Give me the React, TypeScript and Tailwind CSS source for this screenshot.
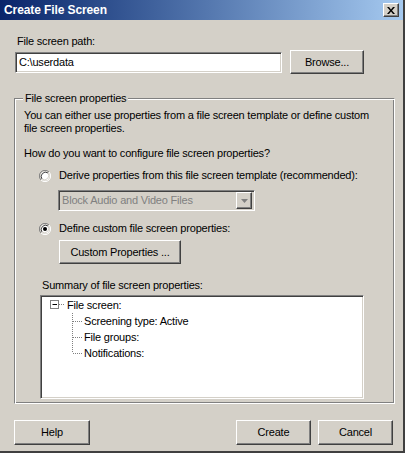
import React from "react";

const raised =
  "bg-[#d4d0c8] border border-t-white border-l-white border-b-[#404040] border-r-[#404040] shadow-[inset_-1px_-1px_0_#808080,inset_1px_1px_0_#d4d0c8]";
const sunken =
  "border border-t-[#808080] border-l-[#808080] border-b-white border-r-white shadow-[inset_1px_1px_0_#404040,inset_-1px_-1px_0_#d4d0c8]";

function Radio({ checked }: { checked?: boolean }) {
  return (
    <svg width="12" height="12" viewBox="0 0 12 12" className="shrink-0">
      <path d="M10 2 A5.5 5.5 0 0 0 2 10" fill="none" stroke="#808080" strokeWidth="1" />
      <path d="M2 10 A5.5 5.5 0 0 0 10 2" fill="none" stroke="#ffffff" strokeWidth="1" />
      <circle cx="6" cy="6" r="4.5" fill="#ffffff" />
      <path d="M9 3 A4.3 4.3 0 0 0 3 9" fill="none" stroke="#404040" strokeWidth="1" />
      <path d="M3 9 A4.3 4.3 0 0 0 9 3" fill="none" stroke="#d4d0c8" strokeWidth="1" />
      {checked && <circle cx="6" cy="6" r="2" fill="#000" />}
    </svg>
  );
}

function Btn({ label, className }: { label: string; className: string }) {
  return (
    <div className={`${raised} ${className} flex items-center justify-center text-black`}>
      {label}
    </div>
  );
}

function TreeChild({ label, last }: { label: string; last?: boolean }) {
  return (
    <div className="flex items-center h-[16px]">
      <svg width="35" height="16" viewBox="0 0 35 16" className="shrink-0">
        <line x1="24.5" y1="0" x2="24.5" y2={last ? 8 : 16} stroke="#808080" strokeDasharray="1 1" />
        <line x1="25" y1="8.5" x2="34" y2="8.5" stroke="#808080" strokeDasharray="1 1" />
      </svg>
      <span className="pl-[1px]">{label}</span>
    </div>
  );
}

export default function App() {
  return (
    <div
      className="w-[405px] h-[453px] bg-[#d4d0c8] text-[11px] leading-[13px] tracking-[-0.2px] text-black overflow-hidden border-r-2 border-b-2 border-r-[#404040] border-b-[#404040] flex flex-col"
      style={{ fontFamily: '"Liberation Sans", Arial, sans-serif' }}
    >
      {/* Title bar */}
      <div className="h-[20px] shrink-0 flex items-center justify-between pl-[4px] pr-[4px] bg-gradient-to-r from-[#0a246a] to-[#a6caf0]">
        <span className="text-white font-bold text-[12px] tracking-[-0.1px]">Create File Screen</span>
        <div className={`${raised} w-[16px] h-[14px] flex items-center justify-center`}>
          <svg width="8" height="7" viewBox="0 0 8 7">
            <path d="M0 0h2l2 2.5L6 0h2L5 3.5 8 7H6L4 4.5 2 7H0l3-3.5z" fill="#000" />
          </svg>
        </div>
      </div>

      <div className="flex flex-col pl-[15px]">
        <div className="pl-[2px] mt-[15px]">File screen path:</div>
        <div className="flex items-center mt-[2px] h-[24px]">
          <div className={`${sunken} bg-white w-[267px] h-[21px] flex items-center pl-[3px]`}>C:\userdata</div>
          <Btn label="Browse..." className="ml-[8px] w-[74px] h-[24px]" />
        </div>

        {/* Group box */}
        <div className="relative mt-[24px] w-[381px] h-[306px] -ml-[1px] border border-t-[#808080] border-l-[#808080] border-b-white border-r-white shadow-[inset_1px_1px_0_#ffffff,inset_-1px_-1px_0_#808080] pl-[9px] pt-[10px] flex flex-col">
          <span className="absolute -top-[7px] left-[8px] px-[2px] bg-[#d4d0c8]">File screen properties</span>
          <div>
            You can either use properties from a file screen template or define custom
            <br />
            file screen properties.
          </div>
          <div className="mt-[12px]">How do you want to configure file screen properties?</div>
          <div className="flex items-center mt-[9px] pl-[15px] gap-[8px]">
            <Radio />
            <span>Derive properties from this file screen template (recommended):</span>
          </div>
          <div className={`${sunken} bg-[#d4d0c8] ml-[34px] mt-[8px] w-[197px] h-[21px] flex items-center justify-between pl-[3px] pr-[2px] text-[#808080]`}>
            <span>Block Audio and Video Files</span>
            <div className={`${raised} w-[16px] h-[17px] flex items-center justify-center`}>
              <svg width="7" height="4" viewBox="0 0 7 4">
                <path d="M0 0h7L3.5 4z" fill="#808080" />
              </svg>
            </div>
          </div>
          <div className="flex items-center mt-[11px] pl-[15px] gap-[8px]">
            <Radio checked />
            <span>Define custom file screen properties:</span>
          </div>
          <Btn label="Custom Properties ..." className="ml-[35px] mt-[5px] w-[122px] h-[24px]" />
          <div className="ml-[18px] mt-[15px]">Summary of file screen properties:</div>
          <div className={`${sunken} bg-white ml-[16px] mt-[3px] w-[324px] h-[104px] pt-[1px] pl-[7px] flex flex-col`}>
            <div className="flex items-center h-[16px]">
              <svg width="19" height="16" viewBox="0 0 19 16" className="shrink-0">
                <rect x="2.5" y="3.5" width="8" height="8" fill="#fff" stroke="#808080" />
                <line x1="4.5" y1="7.5" x2="9" y2="7.5" stroke="#000" />
                <line x1="11" y1="7.5" x2="16" y2="7.5" stroke="#808080" strokeDasharray="1 1" />
              </svg>
              <span>File screen:</span>
            </div>
            <TreeChild label="Screening type: Active" />
            <TreeChild label="File groups:" />
            <TreeChild label="Notifications:" last />
          </div>
        </div>

        <div className="flex items-center mt-[16px] h-[25px] -ml-[1px]">
          <Btn label="Help" className="w-[76px] h-[25px]" />
          <Btn label="Create" className="ml-auto w-[75px] h-[25px]" />
          <Btn label="Cancel" className="ml-[7px] mr-[10px] w-[75px] h-[25px]" />
        </div>
      </div>
    </div>
  );
}
